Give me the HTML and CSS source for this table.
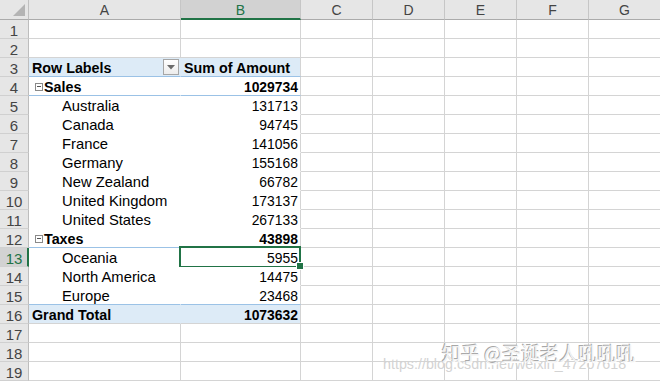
FILE: index.html
```html
<!DOCTYPE html>
<html>
<head>
<meta charset="utf-8">
<link rel="stylesheet" href="styles.css">
</head>
<body>
<div class="sheet">
  <div class="corner"><svg width="12" height="12" viewBox="0 0 12 12"><polygon points="12,0 12,12 0,12" fill="#b4b4b4"/></svg></div>
  <div class="ch">A</div><div class="ch sel-col">B</div><div class="ch">C</div><div class="ch">D</div><div class="ch">E</div><div class="ch">F</div><div class="ch">G</div>

  <div class="rh">1</div><div class="c"></div><div class="c"></div><div class="c"></div><div class="c"></div><div class="c"></div><div class="c"></div><div class="c"></div>
  <div class="rh">2</div><div class="c"></div><div class="c"></div><div class="c"></div><div class="c"></div><div class="c"></div><div class="c"></div><div class="c"></div>

  <div class="rh">3</div>
  <div class="c pa ph"><span class="lbl b">Row Labels</span><span class="dd"><svg width="8" height="5" viewBox="0 0 8 5"><polygon points="0,0 8,0 4,4.5" fill="#6b6b6b"/></svg></span></div>
  <div class="c pb ph"><span class="lbl b">Sum of Amount</span></div>
  <div class="c"></div><div class="c"></div><div class="c"></div><div class="c"></div><div class="c"></div>

  <div class="rh">4</div>
  <div class="c pa sub"><span class="tog"></span><span class="b">Sales</span></div>
  <div class="c pb sub num b">1029734</div>
  <div class="c"></div><div class="c"></div><div class="c"></div><div class="c"></div><div class="c"></div>

  <div class="rh">5</div><div class="c pa"><span class="item">Australia</span></div><div class="c pb num">131713</div><div class="c"></div><div class="c"></div><div class="c"></div><div class="c"></div><div class="c"></div>
  <div class="rh">6</div><div class="c pa"><span class="item">Canada</span></div><div class="c pb num">94745</div><div class="c"></div><div class="c"></div><div class="c"></div><div class="c"></div><div class="c"></div>
  <div class="rh">7</div><div class="c pa"><span class="item">France</span></div><div class="c pb num">141056</div><div class="c"></div><div class="c"></div><div class="c"></div><div class="c"></div><div class="c"></div>
  <div class="rh">8</div><div class="c pa"><span class="item">Germany</span></div><div class="c pb num">155168</div><div class="c"></div><div class="c"></div><div class="c"></div><div class="c"></div><div class="c"></div>
  <div class="rh">9</div><div class="c pa"><span class="item">New Zealand</span></div><div class="c pb num">66782</div><div class="c"></div><div class="c"></div><div class="c"></div><div class="c"></div><div class="c"></div>
  <div class="rh">10</div><div class="c pa"><span class="item">United Kingdom</span></div><div class="c pb num">173137</div><div class="c"></div><div class="c"></div><div class="c"></div><div class="c"></div><div class="c"></div>
  <div class="rh">11</div><div class="c pa"><span class="item">United States</span></div><div class="c pb num">267133</div><div class="c"></div><div class="c"></div><div class="c"></div><div class="c"></div><div class="c"></div>

  <div class="rh">12</div>
  <div class="c pa sub"><span class="tog"></span><span class="b">Taxes</span></div>
  <div class="c pb sub num b">43898</div>
  <div class="c"></div><div class="c"></div><div class="c"></div><div class="c"></div><div class="c"></div>

  <div class="rh sel-row">13</div><div class="c pa"><span class="item">Oceania</span></div><div class="c pb num active">5955</div><div class="c"></div><div class="c"></div><div class="c"></div><div class="c"></div><div class="c"></div>
  <div class="rh">14</div><div class="c pa"><span class="item">North America</span></div><div class="c pb num">14475</div><div class="c"></div><div class="c"></div><div class="c"></div><div class="c"></div><div class="c"></div>
  <div class="rh">15</div><div class="c pa sub"><span class="item">Europe</span></div><div class="c pb sub num">23468</div><div class="c"></div><div class="c"></div><div class="c"></div><div class="c"></div><div class="c"></div>

  <div class="rh">16</div>
  <div class="c pa gt"><span class="lbl b">Grand Total</span></div>
  <div class="c pb gt num b">1073632</div>
  <div class="c"></div><div class="c"></div><div class="c"></div><div class="c"></div><div class="c"></div>

  <div class="rh">17</div><div class="c"></div><div class="c"></div><div class="c"></div><div class="c"></div><div class="c"></div><div class="c"></div><div class="c"></div>
  <div class="rh">18</div><div class="c"></div><div class="c"></div><div class="c"></div><div class="c"></div><div class="c"></div><div class="c"></div><div class="c"></div>
  <div class="rh">19</div><div class="c"></div><div class="c"></div><div class="c"></div><div class="c"></div><div class="c"></div><div class="c"></div><div class="c"></div>
</div>
<div class="wm-url">https://blog.csdn.net/weixin_47207618</div>
<div class="wm-zh">知乎 @圣诞老人吼吼吼</div>
</body>
</html>
```

FILE: styles.css
```css
* { box-sizing: border-box; }
html, body { margin: 0; padding: 0; background: #fff; overflow: hidden; }
body { width: 660px; height: 381px; position: relative; font-family: "Liberation Sans", Arial, sans-serif; color: #000; }

.sheet {
  display: grid;
  grid-template-columns: 29px 152px 120px 72px 72px 72px 72px 72px;
  grid-template-rows: 20px repeat(19, 19px);
  width: 661px;
}

.corner {
  background: #e6e6e6;
  border-right: 1px solid #c0c0c0;
  border-bottom: 1px solid #ababab;
  display: flex;
  align-items: flex-end;
  justify-content: flex-end;
  padding: 0 3px 3px 0;
}

.ch {
  background: #e6e6e6;
  border-right: 1px solid #c6c6c6;
  border-bottom: 1px solid #ababab;
  font-size: 14px;
  color: #444;
  display: flex;
  align-items: center;
  justify-content: center;
  padding-top: 1px;
}
.ch.sel-col {
  background: #d2d2d2;
  color: #217346;
  border-bottom: 2px solid #217346;
  padding-top: 2px;
}

.rh {
  background: #e6e6e6;
  border-right: 1px solid #bdbdbd;
  border-bottom: 1px solid #d0d0d0;
  font-size: 15px;
  color: #444;
  display: flex;
  align-items: center;
  justify-content: center;
  padding-top: 2px;
}
.rh.sel-row {
  background: #d2d2d2;
  color: #217346;
  border-right: 2px solid #217346;
  padding-left: 1px;
}

.c {
  border-right: 1px solid #d4d4d4;
  border-bottom: 1px solid #d4d4d4;
  display: flex;
  align-items: center;
  font-size: 14.8px;
  white-space: nowrap;
  padding-top: 2px;
  position: relative;
}

/* pivot table area */
.pa { background: #fff; border-right-color: #fff; border-bottom-color: #fff; padding-left: 3px; }
.pb { background: #fff; border-bottom-color: #fff; padding-left: 3px; }
.pa.sub, .pb.sub { border-bottom-color: #9bc2e6; }
.ph { background: #ddebf7; border-bottom-color: #9bc2e6; }
.pa.ph { border-right-color: #ddebf7; }
.gt { background: #ddebf7; border-bottom-color: #d4d4d4; }
.pa.gt { border-right-color: #ddebf7; }

.b { font-weight: bold; font-size: 14.3px; }
.num { justify-content: flex-end; padding-right: 2px; font-size: 13.9px; }
.num.b { font-size: 13.9px; }
.item { padding-left: 30px; }

.dd {
  margin-left: auto;
  margin-right: 1px;
  width: 16px;
  height: 16px;
  border: 1px solid #a6a6a6;
  background: linear-gradient(#ffffff, #ececec);
  display: flex;
  align-items: center;
  justify-content: center;
  margin-top: -2px;
}

.tog {
  width: 8px;
  height: 8px;
  border: 1px solid #8a8a8a;
  margin: -1px 1px 0 3px;
  position: relative;
  background: #fff;
}
.tog::after {
  content: "";
  position: absolute;
  left: 1px;
  right: 1px;
  top: 2px;
  height: 1px;
  background: #555;
}

.active::after {
  content: "";
  position: absolute;
  left: -2px;
  top: -2px;
  right: -1px;
  bottom: -2px;
  border: 2px solid #217346;
  pointer-events: none;
}
.active::before {
  content: "";
  position: absolute;
  right: -4px;
  bottom: -4px;
  width: 6px;
  height: 6px;
  background: #217346;
  border: 1px solid #fff;
  z-index: 2;
}

.wm-url {
  position: absolute;
  left: 383px;
  top: 356px;
  font-size: 14.3px;
  color: #d3d3d3;
  font-family: "Liberation Sans", Arial, sans-serif;
  white-space: nowrap;
}
.wm-zh {
  position: absolute;
  left: 442px;
  top: 339px;
  font-size: 19px;
  font-family: "Noto Sans CJK SC", sans-serif;
  color: #f2f2f2;
  text-shadow: -1px -1px 0 #a8a8a8, 1px 1px 0 #fff;
  white-space: nowrap;
}
```
